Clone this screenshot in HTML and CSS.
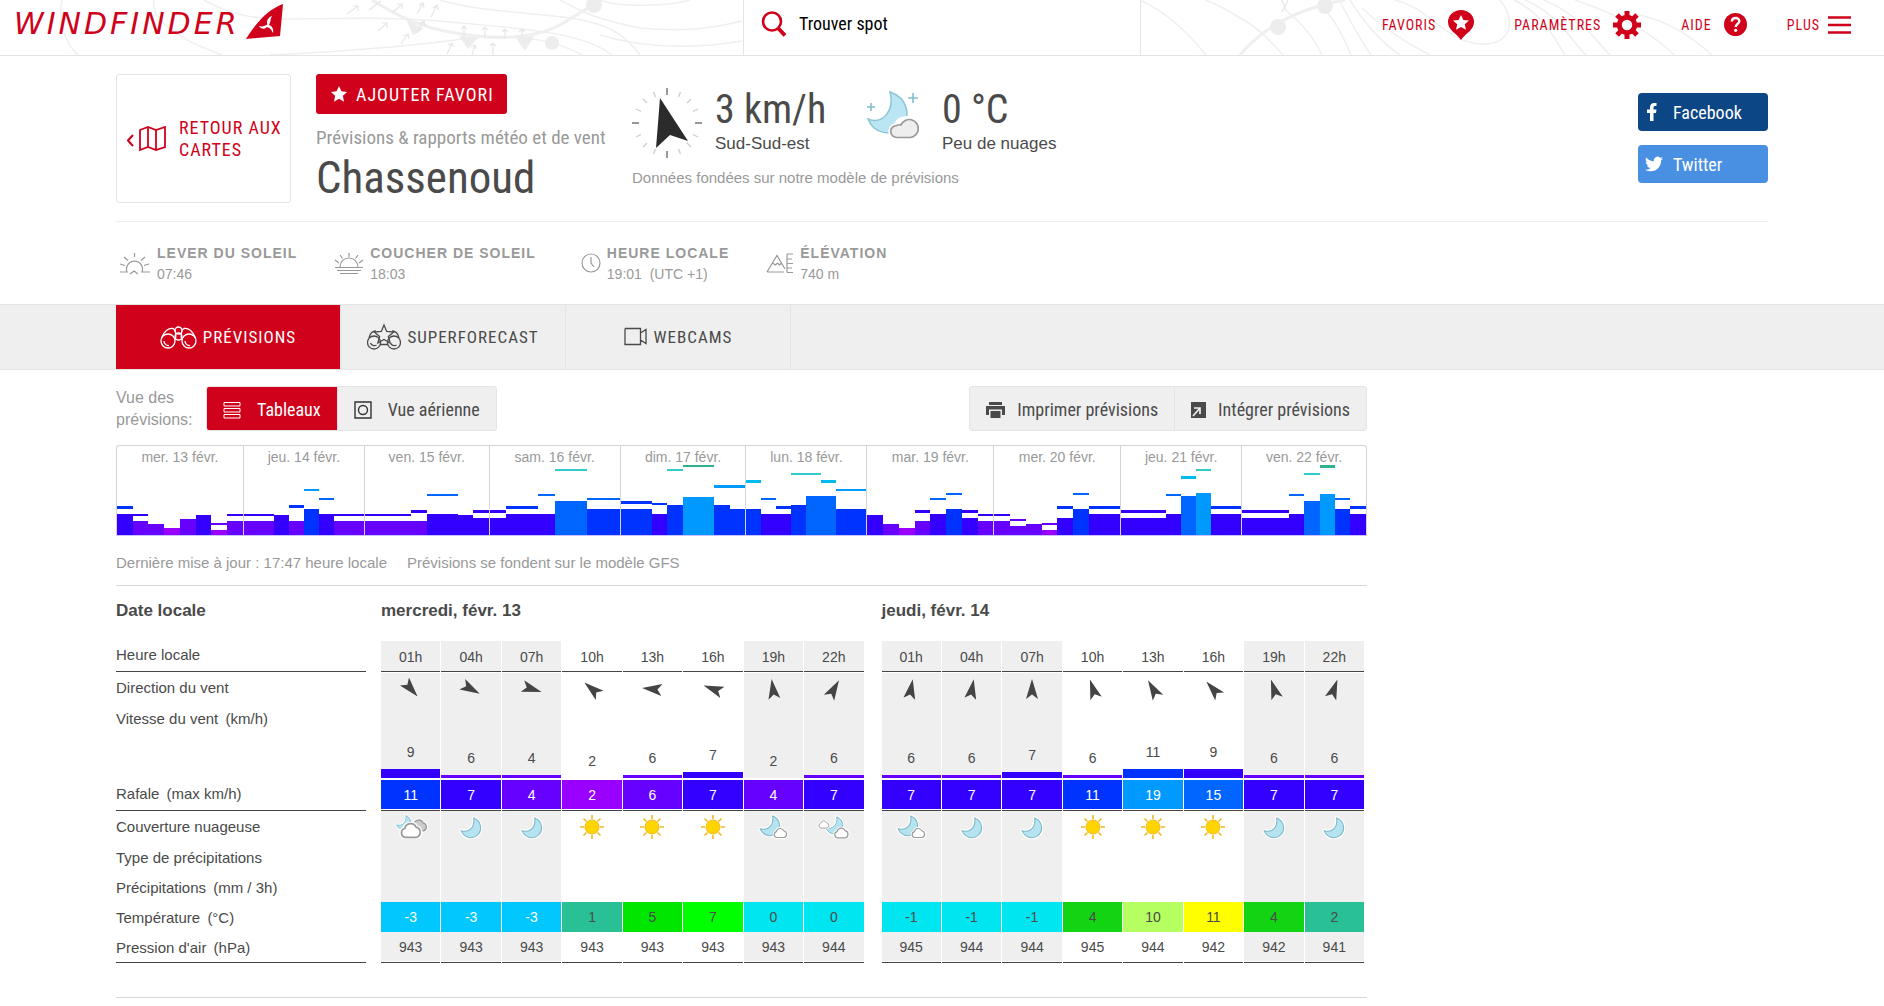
FILE: index.html
```html
<!DOCTYPE html>
<html lang="fr">
<head>
<meta charset="utf-8">
<meta name="viewport" content="width=device-width, initial-scale=1">
<title>Windfinder - Chassenoud</title>
<link rel="stylesheet" href="styles.css">
</head>
<body>
<svg width="0" height="0" class="defs" aria-hidden="true">
  <symbol id="moon" viewBox="0 0 22 22"><path d="M14 2C22 5 23 15 16 19.500C10.500 22.500 4.500 20 2 14C9 16.500 15.500 11 14 2Z" fill="#b5e3f0" stroke="#fff" stroke-width="3.500" stroke-linejoin="round"/><path d="M14 2C22 5 23 15 16 19.500C10.500 22.500 4.500 20 2 14C9 16.500 15.500 11 14 2Z" fill="#b5e3f0" stroke="#7cb6c9"/></symbol>
  <symbol id="cloud" viewBox="0 0 20 15"><path d="M5 13.500A4 4 0 0 1 4.500 5.700A5.300 5.300 0 0 1 14.500 4.500A4.700 4.700 0 0 1 15 13.500Z" fill="inherit" stroke="#fff" stroke-width="4"/><path d="M5 13.500A4 4 0 0 1 4.500 5.700A5.300 5.300 0 0 1 14.500 4.500A4.700 4.700 0 0 1 15 13.500Z" stroke="#999" stroke-width="1.500"/></symbol>
  <symbol id="w-moon" viewBox="0 0 34 26"><use href="#moon" x="5" y="2" width="23" height="23"/></symbol>
  <symbol id="w-sun" viewBox="0 0 34 26"><path d="M17 1v4M17 21v4M5 13h4M25 13h4M8.500 4.500l3 3M22.500 18.500l3 3M8.500 21.500l3-3M22.500 7.500l3-3" stroke="#f5b921" stroke-width="1.600"/><circle cx="17" cy="13" r="7" fill="#ffd500" stroke="#f5b921"/></symbol>
  <symbol id="w-few" viewBox="0 0 34 26"><use href="#moon" x="2" y="0" width="23" height="23"/><use href="#cloud" x="17" y="13" width="15" height="12" fill="#fff"/></symbol>
  <symbol id="w-part" viewBox="0 0 34 26"><use href="#moon" x="7" y="1" width="20" height="20"/><use href="#cloud" x="1" y="6" width="12" height="9" fill="#fff"/><use href="#cloud" x="16" y="13" width="17" height="12" fill="#fff"/></symbol>
  <symbol id="w-cloudy" viewBox="0 0 34 26"><use href="#moon" x="1" y="0" width="17" height="17"/><use href="#cloud" x="16" y="4" width="18" height="15" fill="#ccc"/><use href="#cloud" x="5" y="8" width="24" height="17" fill="#fff"/></symbol>
  <symbol id="arrow" viewBox="0 0 20 20"><path d="M10 0L16 20L10 15.500L4 20Z" fill="#444"/></symbol>
  <symbol id="star" viewBox="0 0 20 20"><path d="M10 1l2.700 6 6.300.700-4.700 4.300 1.300 6.500L10 15.300 4.400 18.500l1.300-6.500L1 7.700 7.300 7Z" fill="currentColor"/></symbol>
</svg>

<header class="header">
  <svg class="isobars" viewBox="0 0 1884 55" preserveAspectRatio="xMidYMid slice" fill="none" stroke="#efefef" stroke-width="1.500" aria-hidden="true">
    <path d="M62 0C58 20 64 42 78 55M154 0C150 20 180 40 222 55M204 0C225 12 250 20 290 19C350 18 400 17 450 22C510 28 580 30 612 55M270 55C340 52 420 45 455 40C490 34 545 34 582 55M440 0C480 12 530 12 570 18S625 35 640 55M560 0C580 10 590 18 640 28C680 32 710 29 742 21M600 35C650 50 700 48 742 41M600 0C620 8 670 6 690 0"/>
    <path d="M1139 0C1165 10 1190 35 1206 55M1205 0C1220 5 1240 18 1240 18C1255 25 1270 40 1283 55M1285 10C1305 25 1315 40 1322 55M1327 12C1338 25 1345 40 1351 55M1339 0C1350 20 1360 40 1371 55M1350 0C1365 25 1385 45 1400 55M1362 8C1385 30 1410 45 1430 55M1395 0C1430 8 1445 42 1480 44C1510 46 1518 22 1500 0M1514 0C1545 15 1555 40 1565 55M1525 0C1560 15 1570 40 1586 55M1544 0C1580 15 1595 40 1610 55M1575 0C1620 15 1655 35 1674 55M1634 14C1670 20 1695 40 1712 55"/>
    <path d="M372 0C400 18 425 28 450 32C500 42 540 38 565 22L596 3M1240 55C1265 25 1300 8 1345 0" stroke-width="3"/>
    <g fill="#ededed" stroke="none"><path d="M406 19l18 10-11 6zM459 36l19 2-10 11zM516 38l18-2-9 15z"/><circle cx="552" cy="43" r="7"/><circle cx="594" cy="5" r="8"/><circle cx="1278" cy="27" r="8"/><circle cx="1325" cy="6" r="8"/></g>
    <path stroke="#e6e6e6" stroke-width="1.200" d="M347 14l11-8m-5 0h5v5M369 10l12-9M378 31l9-8m-5 0h5v5M393 12l9-8m-5 0h5v5M401 44l7-10m-5 2l5-2 1 5M417 33l7-12m-5 3l5-3 1 5M417 14l6-11m-4 2l4-2 1 5M431 17l6-12m-4 3l4-3 1 5M447 54l5-11m-4 2l4-2 1 4M464 38v-12m-3 3l3-3 3 3M472 55l3-10m-4 2l4-2 1 4M485 38v-11m-3 3l3-3 3 3M493 55v-12m-3 3l3-3 3 3M505 39v-10m-3 3l3-3 3 3M522 38v-9m-3 3l3-3 3 3M1282 12l6-12m-6 0l4 10"/>
  </svg>
  <a class="logo" href="#" aria-label="Windfinder">
    <span class="logo-text">WINDFINDER</span>
    <svg width="38" height="36" viewBox="0 0 38 36" aria-hidden="true"><path d="M0 35C12 16 22 6 37 0L34 32Z" fill="#d0021b"/><path d="M22 22C20 18 21 14 26 12C24 15 25 18 23 21C26 22 28 25 27 29C25 25 24 24 21 23C18 26 15 25 13 22C17 23 19 22 22 20Z" fill="#fff"/></svg>
  </a>
  <label class="search">
    <svg width="26" height="26" viewBox="0 0 26 26" fill="none" stroke="#d0021b" aria-hidden="true"><circle cx="11" cy="10.500" r="9" stroke-width="2.600"/><path d="M17 17l7 7.500" stroke-width="4"/></svg>
    <input type="text" placeholder="Trouver spot" aria-label="Trouver spot">
  </label>
  <nav class="menu" aria-label="Menu">
    <a href="#">FAVORIS <svg width="26" height="30" viewBox="0 0 26 30"><path d="M13 30C8 23 0 20 0 12A13 12 0 0 1 26 12C26 20 18 23 13 30Z" fill="#d0021b"/><path d="M13 5l2.400 5 5.600.600-4.200 3.700 1.200 5.500-5-2.800-5 2.800 1.200-5.500L5 10.600l5.600-.600Z" fill="#fff"/></svg></a>
    <a href="#">PARAMÈTRES <svg width="28" height="28" viewBox="0 0 28 28" fill="none" stroke="#d0021b"><circle cx="14" cy="14" r="7.700" stroke-width="5"/><path d="M14 0v5M14 23v5M0 14h5M23 14h5M4 4l4 4M20 20l4 4M4 24l4-4M20 8l4-4" stroke-width="5"/></svg></a>
    <a href="#">AIDE <svg width="23" height="23" viewBox="0 0 23 23"><circle cx="11.500" cy="11.500" r="11.500" fill="#d0021b"/><path d="M7.800 8.500C8 3.700 15.500 3.900 15.300 8.300C15.200 10.800 11.700 11 11.700 14" fill="none" stroke="#fff" stroke-width="2.400"/><circle cx="11.700" cy="17.300" r="1.600" fill="#fff"/></svg></a>
    <a class="more" href="#">PLUS <svg width="23" height="18" viewBox="0 0 23 18"><path d="M0 1.500h23M0 9h23M0 16.500h23" stroke="#d0021b" stroke-width="2.600"/></svg></a>
  </nav>
</header>

<section class="spot wrap">
  <a class="back" href="#">
    <svg width="40" height="26" viewBox="0 0 40 26" fill="none" stroke="#d0021b" stroke-width="2" aria-hidden="true"><path d="M6 9L1 14.500L6 20"/><path d="M13 4l8-3 8 3 9-3v20l-9 3-8-3-8 3ZM21 1v20M29 4v20" stroke-width="1.800"/></svg>
    <span>RETOUR AUX CARTES</span>
  </a>
  <div class="title">
    <button class="fav" type="button"><svg width="18" height="18"><use href="#star"/></svg>AJOUTER FAVORI</button>
    <p class="subtitle">Prévisions &amp; rapports météo et de vent</p>
    <h1>Chassenoud</h1>
  </div>
  <div class="now">
    <div class="now-row">
      <svg width="70" height="70" viewBox="0 0 70 70" aria-hidden="true"><g stroke="#999" stroke-width="2"><path d="M35 0v7M35 63v7M0 35h7M63 35h7"/></g><g stroke="#ccc" stroke-width="1.300"><path d="M21.500 4l2 5M11 11l4 4M4 21l5 2.500M48.500 4l-2 5M59 11l-4 4M66 21l-5 2.500M21.500 66l2-5M11 59l4-4M4 49l5-2.500M48.500 66l-2-5M59 59l-4-4M66 49l-5-2.500"/></g><path d="M28 10L56 53L38 47L24 60Z" fill="#2b2b2b"/></svg>
      <div class="now-val wind"><strong>3 km/h</strong><span>Sud-Sud-est</span></div>
      <svg width="52" height="50" viewBox="0 0 52 50" aria-hidden="true"><path d="M23 1C41 7 45 26 33 37C23 45 7 43 1 28C15 34 28 20 23 1Z" fill="#b9e6f2" stroke="#8cc5d4" stroke-width="1.500"/><path d="M46 2v10M41 7h10M4 12v8M0 16h8" stroke="#82bfd0" stroke-width="1.600"/><path d="M30 46.500A6 6 0 0 1 29.500 34.500A8 7.500 0 0 1 37 28A9 9.300 0 0 1 43 46.500Z" fill="#eee" stroke="#fff" stroke-width="5"/><path d="M30 46.500A6 6 0 0 1 29.500 34.500A6 6 0 0 1 34 34A9 9 0 1 1 43 46.500Z" fill="#eee" stroke="#999" stroke-width="1.700"/></svg>
      <div class="now-val"><strong>0 °C</strong><span>Peu de nuages</span></div>
    </div>
    <p>Données fondées sur notre modèle de prévisions</p>
  </div>
  <div class="social">
    <a class="fb" href="#"><svg width="18" height="18" viewBox="0 0 18 18"><path d="M5 18V10H2V6.500h3V4.500C5 1.500 6.500 0 9 0h2.500v3H10c-1 0-1.500.500-1.500 1.500v2h3L11 10h-2.500v8Z" fill="#fff"/></svg>Facebook</a>
    <a class="tw" href="#"><svg width="18" height="18" viewBox="0 0 24 24"><path d="M24 4.600c-.900.400-1.800.700-2.800.800 1-.600 1.800-1.600 2.200-2.700-1 .600-2 1-3.100 1.200A4.900 4.900 0 0 0 11.900 8.400C7.700 8.200 4.100 6.200 1.700 3.200A4.900 4.900 0 0 0 3.200 9.700C2.400 9.700 1.600 9.500 1 9.100c0 2.400 1.700 4.400 3.900 4.900-.700.200-1.500.200-2.200.100.600 2 2.400 3.400 4.600 3.400A9.900 9.900 0 0 1 0 19.500 13.900 13.900 0 0 0 7.500 21.700C16.700 21.700 21.800 13.900 21.500 7c1-.700 1.800-1.500 2.500-2.400Z" fill="#fff"/></svg>Twitter</a>
  </div>
</section>

<dl class="facts wrap">
  <div><svg width="32" height="24" viewBox="0 0 32 24"><path d="M1 20h7a8 8 0 1 1 15 0h8M11 22l4-3 4 3M15.500 1v4M5 5l4 3.500M26 5l-4 3.500M1 12l5 1.500M30 12l-5 1.500"/></svg><dt>LEVER DU SOLEIL</dt><dd>07:46</dd></div>
  <div><svg width="30" height="24" viewBox="0 0 30 24"><path d="M6 15a9 9 0 0 1 18 0M1 15.500h28M3 18.500h24M6 21.500h18M15 1v4M6 3l2.500 3.500M24 3l-2.500 3.500M1 8l4 3M29 8l-4 3"/></svg><dt>COUCHER DE SOLEIL</dt><dd>18:03</dd></div>
  <div><svg width="28" height="24" viewBox="-8 0 28 24"><circle cx="10" cy="11" r="9"/><path d="M10 5v6l3 4"/></svg><dt>HEURE LOCALE</dt><dd>19:01 &nbsp;(UTC +1)</dd></div>
  <div><svg width="28" height="24" viewBox="0 0 28 24"><path d="M1 20L11 3.500L19 17M1 20h17M6.500 11l3 2 2-2 2 2 2-2M21 2v18.500M21 2h6M21 7h5M21 11.500h6M21 16h5M21 20.500h6"/></svg><dt>ÉLÉVATION</dt><dd>740 m</dd></div>
</dl>

<nav class="tabs" aria-label="Vues">
  <div class="wrap">
    <a class="active" href="#"><svg width="37" height="23" viewBox="0 0 37 23"><circle cx="8" cy="15" r="7"/><circle cx="29" cy="15" r="7"/><path d="M4 15a4.500 4.500 0 0 0 5 4.500M25 15a4.500 4.500 0 0 0 5 4.500M1.500 12C4 5 9 1.500 13 2.500C16 4 16.500 10 15 14M35.500 12C33 5 28 1.500 24 2.500C21 4 20.500 10 22 14"/><circle cx="18.500" cy="4.500" r="3.500"/><circle cx="18.500" cy="10.500" r="3.500"/></svg>PRÉVISIONS</a>
    <a href="#"><svg width="34" height="28" viewBox="0 0 34 28"><circle cx="7" cy="19.500" r="6.500"/><circle cx="27" cy="19.500" r="6.500"/><path d="M3.500 20a4 4 0 0 0 6 2M23.500 20a4 4 0 0 0 6 2M2 15C3 10 6 8 9 8M32 15C31 10 28 8 25 8M13 21.500h8"/><path d="M17 2l2.700 6.500 7 .500-5.300 4.500 1.700 6.500-6.100-3.500-6.100 3.500 1.700-6.500L7.300 9l7-.500Z"/></svg>SUPERFORECAST</a>
    <a href="#"><svg width="24" height="20" viewBox="0 0 24 20"><path d="M1 1.500h15.500v4.500M1 1.500v16h15.500v-4.500M16.500 6L22 2.500v14L16.500 13Z" /></svg>WEBCAMS</a>
  </div>
</nav>

<div class="wrap page">
  <main>
    <div class="toolbar">
      <span class="toolbar-label">Vue des prévisions:</span>
      <div class="group">
        <button class="active" type="button"><svg width="18" height="18" viewBox="0 0 18 18"><path d="M1 1.500h16v3.500H1ZM1 7.500h16V11H1ZM1 13.500h16V17H1Z" fill="none" stroke="#fff"/></svg>Tableaux</button>
        <button type="button"><svg width="18" height="18" viewBox="0 0 18 18" fill="none" stroke="#333" stroke-width="1.400"><path d="M1 1h16v16H1Z"/><circle cx="9" cy="9" r="4.500"/></svg>Vue aérienne</button>
      </div>
      <div class="group end">
        <button type="button"><svg width="19" height="18" viewBox="0 0 19 18" fill="#4a4a4a"><path d="M3 1h13v3H3ZM0 5h19v9h-3V8.500H3V14H0ZM4.500 10h10v7h-10Z"/></svg>Imprimer prévisions</button>
        <button type="button"><svg width="15" height="16" viewBox="0 0 15 16"><path d="M0 0h15v16H0Z" fill="#4a4a4a"/><path d="M3 6h6v6M9 6L2 14" stroke="#efefef" stroke-width="1.700" fill="none"/></svg>Intégrer prévisions</button>
      </div>
    </div>
    <div class="overview" id="overview"></div>
    <p class="meta"><span>Dernière mise à jour : 17:47 heure locale</span><span>Prévisions se fondent sur le modèle GFS</span></p>
    <table class="forecast" id="forecast"></table>
  </main>
  <aside></aside>
</div>
<script src="script.js"></script>
</body>
</html>
```
FILE: styles.css
```css
* { box-sizing: border-box; }
body { margin: 0; background: #fff; color: #4a4a4a; font-family: "Liberation Sans", Arial, sans-serif; font-size: 14px; }
p, h1, dl, dd { margin: 0; }
a { text-decoration: none; color: inherit; }
svg { flex: none; }
button { font: inherit; color: inherit; cursor: pointer; border: 0; }
.defs { position: absolute; }
.wrap { max-width: 1652px; margin: 0 auto; }
.header, .back, .fav, .subtitle, h1, .now-val strong, .social, .tabs, .group { font-family: "Roboto Condensed", "Liberation Sans Narrow", Roboto, sans-serif; }

.header { position: relative; display: grid; grid-template-columns: 1fr 398px 1fr; height: 56px; border-bottom: 1px solid #e4e4e4; overflow: hidden; }
.isobars { position: absolute; inset: 0; width: 100%; height: 100%; }
.logo, .search, .menu { position: relative; display: flex; }
.logo { padding: 4px 0 0 14px; gap: 6px; align-items: flex-start; justify-self: start; color: #d0021b; }
.logo-text { font: italic 30px/40px "DejaVu Sans", sans-serif; letter-spacing: 3px; }
.search { align-items: center; gap: 12px; padding: 0 17px 7px; background: #fff; border: solid #e4e4e4; border-width: 0 1px; }
.search input { flex: 1; min-width: 0; border: 0; padding: 0; outline: 0; background: none; font: inherit; font-size: 18px; line-height: 24px; }
.search input::placeholder { color: #000; opacity: 1; }
.menu { justify-content: flex-end; align-items: center; gap: 40px; padding: 0 33px 6px 0; color: #d0021b; font-size: 14px; letter-spacing: 1px; }
.menu a { display: flex; align-items: center; gap: 12px; }
.menu .more { gap: 8px; }

.spot { display: flex; align-items: flex-start; padding: 18px 0; border-bottom: 1px solid #efefef; }
.back { display: flex; align-items: center; gap: 12px; width: 175px; height: 129px; padding-left: 10px; border: 1px solid #e4e4e4; border-radius: 3px; color: #d0021b; font-size: 18px; line-height: 22px; letter-spacing: 1px; }
.title { min-width: 286px; margin: 0 30px 0 25px; height: 129px; }
.fav { display: flex; align-items: center; gap: 8px; width: 191px; height: 40px; padding: 0 14px; border-radius: 3px; background: #d0021b; color: #fff; font-size: 18px; letter-spacing: 1px; white-space: nowrap; }
.subtitle { margin-top: 12px; font-size: 19px; line-height: 24px; color: #999; white-space: nowrap; }
h1 { font-size: 45px; font-weight: 400; line-height: 56px; }
.title { width: 286px; }
.now { padding-top: 14px; }
.now-row { display: flex; height: 78px; }
.now-row svg + .now-val { padding-left: 13px; }
.now-row .wind { width: 165px; }
.now-row .wind ~ svg { margin: 3px 10px 0 0; }
.now-val { display: flex; flex-direction: column; font-size: 17px; line-height: 26px; }
.now-val strong { font-size: 40px; font-weight: 400; line-height: 43px; }
.now p { font-size: 15px; line-height: 24px; color: #999; }
.social { display: grid; gap: 14px; width: 130px; margin: 19px 0 0 auto; font-size: 18px; color: #fff; }
.social a { display: flex; align-items: center; gap: 10px; height: 38px; padding-left: 7px; border-radius: 4px; }
.fb { background: #0d4684; }
.tw { background: #4a90e2; }

.facts { display: flex; gap: 37px; height: 82px; padding: 19px 3px 0; color: #999; }
.facts div { display: grid; grid-template-columns: auto auto; column-gap: 6px; align-content: start; line-height: 21px; }
.facts svg { grid-row: 1 / 3; margin-top: 11px; fill: none; stroke: #999; stroke-width: 1.2px; }
.facts dt { font-weight: 700; letter-spacing: 1px; padding-top: 2px; }
.facts dd { line-height: 20px; }

.tabs { background: #efefef; border: solid #e4e4e4; border-width: 1px 0; }
.tabs .wrap { display: flex; }
.tabs a { display: flex; align-items: center; justify-content: center; gap: 6px; width: 225px; height: 64px; border-right: 1px solid #e4e4e4; font-size: 17px; letter-spacing: 1px; }
.tabs svg { fill: none; stroke: #4a4a4a; stroke-width: 1.3px; }
.tabs .active { background: #d0021b; color: #fff; }
.tabs .active svg { stroke: #fff; }

.page { display: grid; grid-template-columns: minmax(0, 1fr) 401px; }
.toolbar { display: flex; align-items: center; margin: 15px 0 14px; }
.toolbar-label { width: 90px; padding-top: 2px; font-size: 16px; line-height: 22px; color: #999; }
.group { display: flex; border-radius: 3px; overflow: hidden; border: 1px solid #e4e4e4; background: #efefef; }
.group button { display: flex; align-items: center; height: 43px; gap: 16px; padding: 3px 16px 0; background: none; font-size: 18px; white-space: nowrap; }
.group button + button { border-left: 1px solid #e4e4e4; }
.group .active { background: #d0021b; color: #fff; }
.end { margin-left: auto; }
.end button { gap: 12px; }

.overview { display: grid; grid-template: 89px / 126fr 121fr 125fr 131fr 126fr 121fr 127fr 127fr 121fr 125fr; height: 91px; border: 1px solid #d5d5d5; border-bottom-color: #c8c0ff; border-radius: 3px 3px 0 0; }
.ov-day { display: flex; flex-direction: column; text-align: center; color: #999; line-height: 22px; white-space: nowrap; min-width: 0; }
.ov-day + .ov-day { border-left: 1px solid #d5d5d5; }
.ov-bars { flex: 1; min-height: 0; display: flex; align-items: flex-end; }
.ov-bars > span { flex: 1; display: flex; flex-direction: column; }

.meta { display: flex; gap: 20px; height: 50px; padding-top: 16px; font-size: 15px; line-height: 22px; color: #999; border-bottom: 1px solid #d8d8d8; }

main { border-bottom: 1px solid #d8d8d8; }
.forecast { width: calc(100% - 1px); margin: 0 0 34px -1px; table-layout: fixed; border-spacing: 1px 0; text-align: center; }
.forecast .c-label { width: 250px; }
.forecast .c-gap { width: 13px; }
.forecast .c-gap2 { width: 16px; }
.forecast th, .forecast td { padding: 0; height: 30px; font-weight: 400; }
.forecast tbody th { text-align: left; }
.forecast .label { font-size: 15px; }
.forecast thead .date { height: 55px; padding-top: 15px; vertical-align: top; text-align: left; font-size: 17px; font-weight: 700; line-height: 20px; }
.forecast thead .hour, .forecast thead .label { height: 31px; border-bottom: 1px solid #444; }
.forecast thead .hour { padding-top: 2px; }
.forecast thead .label { text-align: left; padding-bottom: 3px; }
.forecast .night { background: #efefef; }
.forecast .dir > * { height: 31px; }
.forecast .dir td { padding-top: 3px; box-shadow: inset 0 1px #fff; }
.forecast tr .label span { margin-left: 3px; }
.forecast svg { display: block; margin: 0 auto; }
.forecast .speed > * { height: 77px; padding-bottom: 2px; vertical-align: bottom; }
.forecast .speed .label { vertical-align: top; padding-top: 7px; }
.forecast .speed td { box-shadow: inset 0 -2px #fff; line-height: 20px; }
.forecast .speed i { display: block; margin-top: 7px; }
.forecast .gust > *, .forecast .pressure > *, .forecast .clouds > * { height: 31px; }
.forecast .gust td, .forecast .gust .label, .forecast .pressure td, .forecast .pressure .label { border-bottom: 1px solid #444; }
.forecast .gust td, .forecast .pressure td { box-shadow: inset 0 -1px #fff; }
.forecast .gust td { color: #fff; }
.forecast .gust .label { padding-bottom: 3px; }
.forecast td.gap, .forecast th.gap { border: 0 !important; }
.forecast .cold { color: #fff; }
```
FILE: script.js
```js
const KMH = ["#9900ff", "#6600ff", "#3300ff", "#0033ff", "#0066ff", "#0099ff", "#00bbee", "#33cccc", "#33b090"];

// Each bar: [height, colour index, gust offset, gust colour index, gust thickness]
const v = [14, 1, 19, 2, 2], b = [21, 2, 26, 3, 3], m = [17, 2, 22, 2, 3], p = [21, 2, 39, 4, 2];
const days = [
  ["mer. 13 févr.", [b, v, [11, 1], [7, 0], [16, 1], [20, 2], [5, 0, 10, 1, 2], v]],
  ["jeu. 14 févr.", [v, v, [20, 2], [14, 1, 27, 3, 3], [26, 3, 44, 5, 2], [21, 2, 35, 4, 2], v, v]],
  ["ven. 15 févr.", [v, v, v, [14, 1, 22, 2, 3], p, p, [20, 2], m]],
  ["sam. 16 févr.", [m, b, b, p, [34, 4, 64, 7, 2], [34, 4, 64, 7, 2], [26, 3, 35, 4, 2], [26, 3, 35, 4, 2]]],
  ["dim. 17 févr.", [[26, 3, 31, 3, 3], [26, 3, 31, 3, 3], [21, 2, 30, 3, 2], [30, 3, 64, 7, 2], [38, 5, 68, 8, 2], [38, 5, 68, 8, 2], [30, 3, 47, 5, 3], [26, 3, 47, 5, 3]]],
  ["lun. 18 févr.", [[26, 3, 52, 6, 3], [21, 2, 35, 4, 2], b, [30, 3, 60, 7, 2], [39, 4, 60, 7, 2], [39, 4, 52, 6, 3], [26, 3, 44, 5, 2], [26, 3, 44, 5, 2]]],
  ["mar. 19 févr.", [[20, 2], [11, 1], [7, 0], [14, 1, 22, 2, 3], [21, 2, 35, 4, 2], [26, 3, 40, 4, 2], m, v]],
  ["mer. 20 févr.", [v, [9, 1, 14, 1, 2], [11, 1], [5, 0, 10, 1, 2], [17, 2, 26, 3, 3], [26, 3, 40, 4, 2], b, b]],
  ["jeu. 21 févr.", [m, m, m, p, [39, 4, 56, 6, 3], [42, 5, 64, 7, 2], b, b]],
  ["ven. 22 févr.", [m, m, m, p, [34, 4, 60, 7, 2], [41, 5, 67, 8, 3], [26, 3, 35, 4, 2], b]]
];
document.getElementById("overview").innerHTML = days.map(([name, bars]) =>
  `<div class="ov-day">${name}<div class="ov-bars">` + bars.map(([h, c, g, gc, t]) =>
    `<span>${g ? `<i style="height:${t}px;margin-bottom:${g - h}px;background:${KMH[gc]}"></i>` : ""}<i style="height:${h}px;background:${KMH[c]}"></i></span>`
  ).join("") + "</div></div>").join("");

const hours = ["01h", "04h", "07h", "10h", "13h", "16h", "19h", "22h"];
const night = i => (i % 8 < 3 || i % 8 > 5 ? "night" : "");
const dir = [139, 119, 107, 310, 276, 290, 352, 30, 10, 10, 0, 342, 330, 318, 342, 20];
const speed = [9, 6, 4, 2, 6, 7, 2, 6, 6, 6, 7, 6, 11, 9, 6, 6];
const gust = [11, 7, 4, 2, 6, 7, 4, 7, 7, 7, 7, 11, 19, 15, 7, 7];
const sky = ["cloudy", "moon", "moon", "sun", "sun", "sun", "few", "part", "few", "moon", "moon", "sun", "sun", "sun", "moon", "moon"];
const temp = [-3, -3, -3, 1, 5, 7, 0, 0, -1, -1, -1, 4, 10, 11, 4, 2];
const air = [943, 943, 943, 943, 943, 943, 943, 944, 945, 944, 944, 945, 944, 942, 942, 941];
const tempColor = { "-3": "#00c8ff", "-1": "#00e6f0", 0: "#00e6f0", 1: "#28c094", 2: "#28c094", 4: "#12d412", 5: "#00e600", 7: "#00ff00", 10: "#b5ff60", 11: "#ffff00" };
const color = k => KMH[k < 3 ? 0 : k < 7 ? 1 : k < 11 ? 2 : k < 15 ? 3 : k < 19 ? 4 : 5];
const height = k => (k < 3 ? 0 : k < 7 ? 3 : k < 9 ? 6 : 9);

function row(cls, label, values, cell) {
  const cells = values.map((x, i) => cell(x, i));
  return `<tr class="${cls}"><th class="label" scope="row">${label}</th><td class="gap"></td>${cells.slice(0, 8).join("")}<td class="gap"></td>${cells.slice(8).join("")}</tr>`;
}
const plain = (x, i) => `<td class="${night(i)}">${x}</td>`;
const hourCells = o => hours.map((h, i) => `<th class="hour ${night(i + o)}" scope="col">${h}</th>`).join("");
const cols = "<col><col><col><col><col><col><col><col>";

document.getElementById("forecast").innerHTML =
  `<colgroup><col class="c-label"><col class="c-gap">${cols}<col class="c-gap2">${cols}</colgroup>
  <thead><tr><th class="date">Date locale</th><td></td><th class="date" colspan="8">mercredi, févr. 13</th><td></td><th class="date" colspan="8">jeudi, févr. 14</th></tr>
  <tr><th class="label">Heure locale</th><td></td>${hourCells(0)}<td></td>${hourCells(8)}</tr></thead><tbody>` +
  row("dir", "Direction du vent", dir, (d, i) => `<td class="${night(i)}"><svg width="20" height="20" viewBox="0 0 20 20" overflow="visible"><use href="#arrow" width="20" height="20" transform="rotate(${d} 10 10)"/></svg></td>`) +
  row("speed", "Vitesse du vent <span>(km/h)</span>", speed, (s, i) => `<td class="${night(i)}">${s}<i style="height:${height(s)}px;background:${color(s)}"></i></td>`) +
  row("gust", "Rafale <span>(max km/h)</span>", gust, g => `<td style="background:${color(g)}">${g}</td>`) +
  row("clouds", "Couverture nuageuse", sky, (s, i) => `<td class="${night(i)}"><svg width="34" height="26"><use href="#w-${s}"/></svg></td>`) +
  row("", "Type de précipitations", Array(16).fill(""), plain) +
  row("", "Précipitations <span>(mm / 3h)</span>", Array(16).fill(""), plain) +
  row("temp", "Température <span>(°C)</span>", temp, t => `<td class="${t < -1 ? "cold" : ""}" style="background:${tempColor[t]}">${t}</td>`) +
  row("pressure", "Pression d'air <span>(hPa)</span>", air, plain) + "</tbody>";
```
